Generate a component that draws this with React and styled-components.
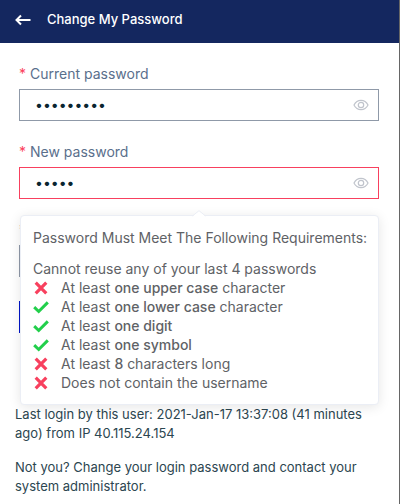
import React from "react";
import styled, { createGlobalStyle } from "styled-components";

const GlobalStyle = createGlobalStyle`
  *, *::before, *::after { box-sizing: border-box; }
  body {
    margin: 0;
    background: #fff;
    font-family: Inter, "Liberation Sans", sans-serif;
    font-size: 14px;
    line-height: 19px;
  }
`;

const Page = styled.div`
  min-height: 100vh;
  border-right: 1px solid #666;
`;

const Header = styled.header`
  display: flex;
  align-items: center;
  gap: 16px;
  height: 43px;
  padding: 0 15px 4px;
  background: #14275f;
  color: #fff;
`;

const BackButton = styled.button`
  display: flex;
  padding: 0;
  border: 0;
  background: none;
  color: inherit;
`;

const Title = styled.h1`
  margin: 0;
  font-size: 13px;
  font-weight: 500;
`;

const Form = styled.form`
  display: flex;
  flex-direction: column;
  gap: 21px;
  padding: 21px 20px 0 19px;
`;

const Field = styled.div`
  position: relative;
`;

const Label = styled.label`
  display: flex;
  gap: 4px;
  height: 25px;
  color: #5a6f8c;
`;

const Required = styled.span`
  color: #fb3f5c;
`;

const InputBox = styled.div`
  display: flex;
  align-items: center;
  height: 32px;
  padding-right: 9px;
  border: 1px solid ${(p) => (p.$invalid ? "#f8405e" : "#8f99a8")};
`;

const PasswordInput = styled.input`
  flex: 1;
  min-width: 0;
  height: 30px;
  padding: 0 15px 2px;
  border: 0;
  outline: 0;
  background: none;
  color: #0a2530;
  font: inherit;
`;

const RevealButton = styled.button`
  display: flex;
  padding: 0;
  border: 0;
  background: none;
  color: #c0c4cc;
`;

const Submit = styled.button`
  align-self: stretch;
  height: 32px;
  margin-top: 3px;
  border: 0;
  background: #0014c8;
`;

const Popover = styled.section`
  position: absolute;
  z-index: 2;
  top: calc(100% + 16px);
  left: 1px;
  right: 0;
  padding: 12px;
  border: 1px solid #ebeef5;
  border-radius: 4px;
  background: #fff;
  color: #606266;
  box-shadow: 0 2px 12px rgba(0, 0, 0, 0.1);
`;

const Pointer = styled.svg`
  position: absolute;
  top: -6px;
  left: calc(50% - 8px);
`;

const PopoverText = styled.p`
  margin: 0 0 ${(p) => (p.$spaced ? "12px" : "0")};
  white-space: nowrap;
`;

const Rules = styled.ul`
  margin: 0;
  padding: 0;
  list-style: none;
`;

const Rule = styled.li`
  display: flex;
  align-items: center;
  gap: 12px;

  b { font-weight: 500; }
`;

const Footer = styled.footer`
  display: flex;
  flex-direction: column;
  gap: 15px;
  padding: 72px 15px 8px;
  color: #2c4650;
  font-size: 13px;
`;

const Note = styled.p`
  margin: 0;
`;

const BackIcon = () => (
  <svg width="16" height="12" viewBox="0 0 16 12" fill="none" stroke="currentColor" strokeWidth="2" aria-hidden="true">
    <path d="M1.5 6H15.5M6 1.5 1.5 6 6 10.5" />
  </svg>
);

const EyeIcon = () => (
  <svg width="16" height="12" viewBox="0 0 16 12" fill="none" stroke="currentColor" strokeWidth="1.2" aria-hidden="true">
    <path d="M1 6C2.6 2.8 5 1.3 8 1.3S13.4 2.8 15 6C13.4 9.2 11 10.7 8 10.7S2.6 9.2 1 6Z" />
    <circle cx="8" cy="6" r="2.7" />
  </svg>
);

const StatusIcon = ({ met }) => (
  <svg
    width="16"
    height="16"
    viewBox="0 0 16 16"
    fill="none"
    stroke={met ? "#22cf4b" : "#f8405e"}
    strokeWidth={met ? 3 : 3.2}
    role="img"
    aria-label={met ? "Met" : "Not met"}
  >
    <path d={met ? "M1.2 8.2 5.7 12.5 14.8 3.4" : "M2.7 2.7 13.3 13.3M13.3 2.7 2.7 13.3"} />
  </svg>
);

function PasswordField({ id, label, value, invalid, children }) {
  return (
    <Field>
      <Label htmlFor={id}>
        <Required>*</Required>
        {label}
      </Label>
      <InputBox $invalid={invalid}>
        <PasswordInput id={id} type="password" defaultValue={value} aria-invalid={invalid} />
        <RevealButton type="button" aria-label="Show password">
          <EyeIcon />
        </RevealButton>
      </InputBox>
      {children}
    </Field>
  );
}

const rules = [
  { met: false, text: <>At least <b>one upper case</b> character</> },
  { met: true, text: <>At least <b>one lower case</b> character</> },
  { met: true, text: <>At least <b>one digit</b></> },
  { met: true, text: <>At least <b>one symbol</b></> },
  { met: false, text: <>At least <b>8</b> characters long</> },
  { met: false, text: "Does not contain the username" },
];

export default function App() {
  return (
    <Page>
      <GlobalStyle />
      <Header>
        <BackButton type="button" aria-label="Back">
          <BackIcon />
        </BackButton>
        <Title>Change My Password</Title>
      </Header>
      <Form>
        <PasswordField id="current" label="Current password" value="abcdefghi" />
        <PasswordField id="new" label="New password" value="ab1!c" invalid>
          <Popover>
            <Pointer width="14" height="7" viewBox="0 0 14 7" aria-hidden="true">
              <path d="M0 7 7 0.7 14 7Z" fill="#fff" />
              <path d="M0.5 6 7 0.7 13.5 6" fill="none" stroke="#ebeef5" />
            </Pointer>
            <PopoverText $spaced>Password Must Meet The Following Requirements:</PopoverText>
            <PopoverText>Cannot reuse any of your last 4 passwords</PopoverText>
            <Rules>
              {rules.map((rule, i) => (
                <Rule key={i}>
                  <StatusIcon met={rule.met} />
                  <span>{rule.text}</span>
                </Rule>
              ))}
            </Rules>
          </Popover>
        </PasswordField>
        <PasswordField id="confirm" />
        <Submit type="submit" aria-label="Save" />
      </Form>
      <Footer>
        <Note>Last login by this user: 2021-Jan-17 13:37:08 (41 minutes ago) from IP 40.115.24.154</Note>
        <Note>Not you? Change your login password and contact your system administrator.</Note>
      </Footer>
    </Page>
  );
}
